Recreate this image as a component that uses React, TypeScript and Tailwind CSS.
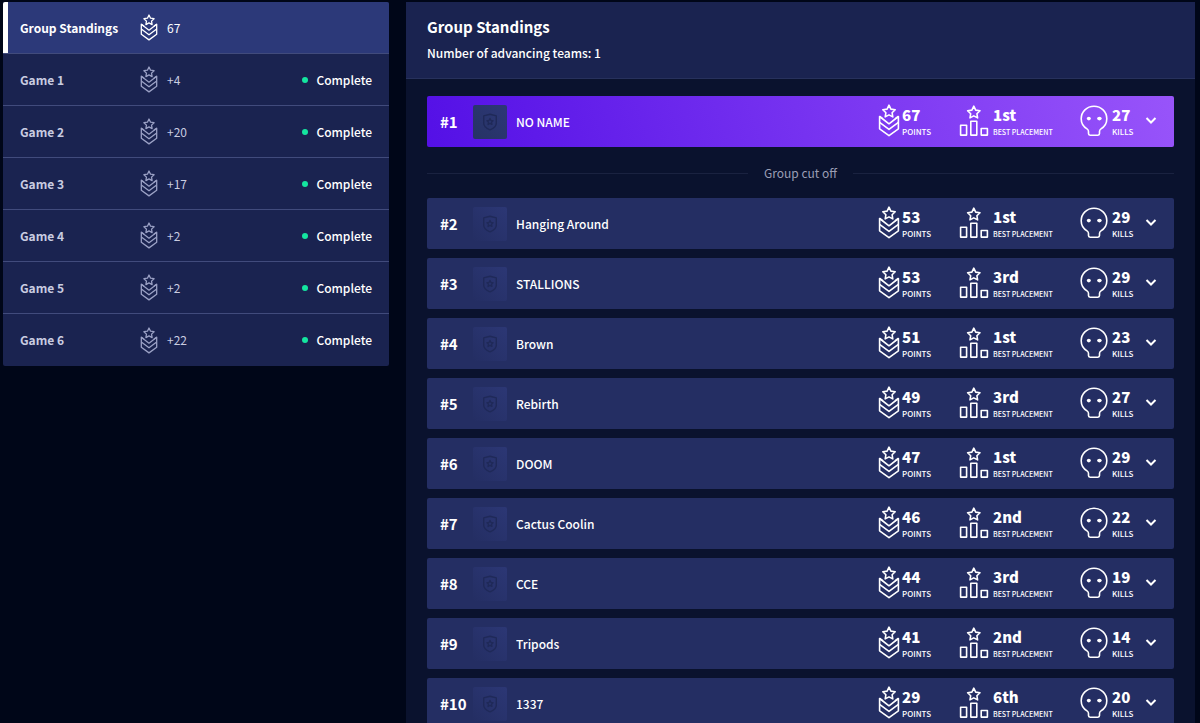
import { useState } from "react";
import clsx from "clsx";

type Game = {
  name: string;
  points: string;
};

type Team = {
  rank: number;
  name: string;
  points: number;
  placement: string;
  kills: number;
};

const games: Game[] = [
  { name: "Game 1", points: "+4" },
  { name: "Game 2", points: "+20" },
  { name: "Game 3", points: "+17" },
  { name: "Game 4", points: "+2" },
  { name: "Game 5", points: "+2" },
  { name: "Game 6", points: "+22" }
];

const teams: Team[] = [
  { rank: 1, name: "NO NAME", points: 67, placement: "1st", kills: 27 },
  { rank: 2, name: "Hanging Around", points: 53, placement: "1st", kills: 29 },
  { rank: 3, name: "STALLIONS", points: 53, placement: "3rd", kills: 29 },
  { rank: 4, name: "Brown", points: 51, placement: "1st", kills: 23 },
  { rank: 5, name: "Rebirth", points: 49, placement: "3rd", kills: 27 },
  { rank: 6, name: "DOOM", points: 47, placement: "1st", kills: 29 },
  { rank: 7, name: "Cactus Coolin", points: 46, placement: "2nd", kills: 22 },
  { rank: 8, name: "CCE", points: 44, placement: "3rd", kills: 19 },
  { rank: 9, name: "Tripods", points: 41, placement: "2nd", kills: 14 },
  { rank: 10, name: "1337", points: 29, placement: "6th", kills: 20 }
];

const advancingTeams = 1;

function PointsIcon({ className }: { className?: string }) {
  return (
    <svg className={className} viewBox="0 0 22 33" fill="none" stroke="currentColor" strokeWidth="1.6" strokeLinejoin="round" aria-hidden="true">
      <path d="M11 1.2l1.9 3.9 4.3.6-3.1 3 .7 4.2-3.8-2-3.8 2 .7-4.2-3.1-3 4.3-.6z" />
      <path d="M5 14.8L1.6 12.5v12.3L11 31.6l9.4-6.8V12.5L17 14.8" />
      <path d="M1.6 12.5L11 19.8l9.4-7.3" />
      <path d="M1.6 18.4L11 25.4l9.4-7" />
    </svg>
  );
}

function PlacementIcon({ className }: { className?: string }) {
  return (
    <svg className={className} viewBox="0 0 30 32" fill="none" stroke="currentColor" strokeWidth="1.6" strokeLinejoin="round" aria-hidden="true">
      <path d="M14.8 1.2l1.9 3.9 4.3.6-3.1 3 .7 4.2-3.8-2-3.8 2 .7-4.2-3.1-3 4.3-.6z" />
      <path d="M1.6 20.3h6v9.8h-6zM11.8 16.2h6v13.9h-6zM22.2 23.5h6.2v6.6h-6.2z" />
    </svg>
  );
}

function KillsIcon({ className }: { className?: string }) {
  return (
    <svg className={className} viewBox="0 0 28 32" fill="none" stroke="currentColor" strokeWidth="1.6" strokeLinejoin="round" aria-hidden="true">
      <path d="M14 1.2C6.8 1.2 1.2 6.8 1.2 13.8c0 4.4 2.2 8 5.8 10.1 1.1.7 1.500 1.300 1.500 2.500v2.200c0 1 .6 1.600 1.600 1.600h7.800c1 0 1.600-.6 1.600-1.600v-2.200c0-1.200.4-1.800 1.500-2.500 3.600-2.100 5.800-5.700 5.800-10.100C26.8 6.8 21.2 1.2 14 1.2z" />
      <ellipse cx="8.8" cy="13.6" rx="2" ry="1.8" fill="currentColor" stroke="none" />
      <ellipse cx="19.4" cy="13.6" rx="2.3" ry="1.8" fill="currentColor" stroke="none" />
    </svg>
  );
}

function TeamLogo({ highlighted }: { highlighted: boolean }) {
  return (
    <span
      className={clsx(
        "flex size-[34px] shrink-0 items-center justify-center rounded-xs text-[#1f2958]",
        highlighted ? "bg-linear-to-bl from-[#2d3777] to-[#263364]" : "bg-linear-to-bl from-[#2c3775] to-[#242e63]"
      )}
    >
      <svg className="h-[18px] w-4" viewBox="0 0 16 18" fill="none" stroke="currentColor" strokeWidth="1.4" strokeLinejoin="round" aria-hidden="true">
        <path d="M8 1.2l6.3 1.7v7.3c0 3-2.4 5-6.3 6.6-3.9-1.6-6.3-3.6-6.3-6.6V2.9z" />
        <path d="M8 5.6l1 1.9 2 .3-1.5 1.5.4 2.1L8 10.4l-1.9 1 .4-2.1L5 7.8l2-.3z" />
      </svg>
    </span>
  );
}

function Stat({ value, label, compact = false }: { value: string | number; label: string; compact?: boolean }) {
  return (
    <span className="flex flex-col pt-0.5">
      <span className="text-[15px] leading-5 font-black">{value}</span>
      <span className={clsx("leading-[14px] font-medium whitespace-nowrap", compact ? "text-[7px]" : "text-[8px]")}>{label}</span>
    </span>
  );
}

function TeamRow({ team, highlighted }: { team: Team; highlighted: boolean }) {
  return (
    <button
      type="button"
      className={clsx(
        "flex h-[51px] w-full items-center rounded-xs pr-[17px] pl-[13px] text-left text-white",
        highlighted ? "bg-linear-[72deg] from-[#5410e6] to-[#9854fa]" : "bg-[#242e63]"
      )}
    >
      <span className="w-[33px] shrink-0 pt-0.5 text-[15px] font-bold">#{team.rank}</span>
      <TeamLogo highlighted={highlighted} />
      <span className="ml-[9px] min-w-0 flex-1 truncate text-xs font-medium">{team.name}</span>
      <span className="flex shrink-0 items-center pb-0.5">
        <span className="flex w-[81px] items-center gap-0.5">
          <PointsIcon className="h-[33px] w-[22px]" />
          <Stat value={team.points} label="POINTS" />
        </span>
        <span className="flex w-[121px] items-center gap-1">
          <PlacementIcon className="h-8 w-[30px]" />
          <Stat value={team.placement} label="BEST PLACEMENT" compact />
        </span>
        <span className="flex w-[65px] items-center gap-1">
          <KillsIcon className="h-8 w-7" />
          <Stat value={team.kills} label="KILLS" />
        </span>
        <svg className="h-3 w-3" viewBox="0 0 12 12" fill="none" stroke="currentColor" strokeWidth="2" aria-hidden="true">
          <path d="M1.5 3L6 7.500 10.5 3" />
        </svg>
      </span>
    </button>
  );
}

export default function App() {
  const [selected, setSelected] = useState("Group Standings");
  const rows = [{ name: "Group Standings", points: "67" }, ...games];

  return (
    <main className="grid min-h-screen grid-cols-[386fr_789fr] items-start gap-[17px] bg-[#000618] pt-0.5 pr-[5px] pl-[3px] font-['Noto_Sans_CJK_JP','Noto_Sans',sans-serif] text-white">
      <nav className="overflow-hidden rounded-xs bg-[#1a2350]">
        {rows.map((row, index) => {
          const active = row.name === selected;
          return (
            <button
              key={row.name}
              type="button"
              onClick={() => setSelected(row.name)}
              className={clsx(
                "relative flex h-[52px] w-full items-center px-[17px] text-left text-xs",
                index < rows.length - 1 && "border-b border-[#414b7c]",
                active ? "bg-[#2c3979] text-white" : "text-[#c9cce0]"
              )}
            >
              {active ? <span className="absolute inset-y-0 left-0 w-[5px] bg-white" /> : null}
              <span className="w-[120px] shrink-0 font-bold">{row.name}</span>
              <PointsIcon className={clsx("h-[27px] w-[18px] shrink-0", !active && "text-[#9aa0c4]")} />
              <span className="ml-[9px] flex-1">{row.points}</span>
              {index > 0 ? (
                <span className="flex items-center gap-2 font-medium text-white">
                  <span className="size-1.5 rounded-full bg-[#14e5a0]" />
                  Complete
                </span>
              ) : null}
            </button>
          );
        })}
      </nav>

      <section className="min-w-0 rounded-xs bg-[#0a122e]">
        <header className="border-b border-[#27315c] bg-[#1a2350] px-[21px] py-[15px]">
          <h1 className="text-[15px] leading-5 font-bold">Group Standings</h1>
          <p className="mt-1.5 text-xs leading-5 font-medium">Number of advancing teams: {advancingTeams}</p>
        </header>

        <div className="grid gap-[9px] px-[21px] pt-[17px]">
          {teams.slice(0, advancingTeams).map((team) => (
            <TeamRow key={team.rank} team={team} highlighted />
          ))}
          <div className="flex items-center gap-4 pt-[7px] pb-1.5 text-xs leading-5 text-[#9a9eb4]">
            <span className="h-px flex-1 bg-[#1a2240]" />
            Group cut off
            <span className="h-px flex-1 bg-[#1a2240]" />
          </div>
          {teams.slice(advancingTeams).map((team) => (
            <TeamRow key={team.rank} team={team} highlighted={false} />
          ))}
        </div>
      </section>
    </main>
  );
}
